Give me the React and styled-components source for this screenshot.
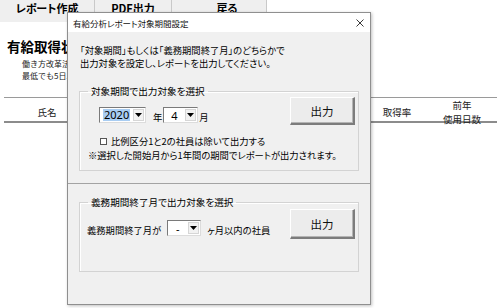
import React from "react";
import styled, { createGlobalStyle } from "styled-components";

const GlobalStyle = createGlobalStyle`
  html, body {
    margin: 0;
    padding: 0;
    background: #ffffff;
  }
  body {
    width: 500px;
    height: 308px;
    overflow: hidden;
    font-family: "Noto Sans CJK JP", "Noto Sans", sans-serif;
    color: #000;
  }
`;

// SHEET (background)
const Sheet = styled.div`
  position: relative;
  width: 500px;
  height: 308px;
`;

const Toolbar = styled.div`
  display: flex;
  height: 22px;
`;

const ToolButton = styled.div`
  width: ${(p) => p.$w}px;
  height: 22px;
  box-sizing: border-box;
  padding-left: ${(p) => p.$pl || 0}px;
  background: #efefef;
  border-right: 1px solid #c9c9c9;
  font-size: 11px;
  font-weight: bold;
  line-height: 16px;
  text-align: center;
  font-feature-settings: "palt";
`;

const SheetTitle = styled.h1`
  margin: 15px 0 0 7px;
  font-size: 13.5px;
  line-height: 18px;
  font-weight: bold;
  white-space: nowrap;
  font-feature-settings: "palt";
`;

const Note = styled.p`
  margin: 0 0 0 22px;
  font-size: 8px;
  line-height: 12px;
  color: #222;
  white-space: nowrap;
`;

const Notes = styled.div`
  margin-top: 3px;
`;

const HeaderRow = styled.div`
  display: grid;
  grid-template-columns: 86px 1fr 60px 70px;
  align-items: center;
  margin: 15px 3px 0 4px;
  height: 23px;
  border-top: 1px solid #9a9a9a;
  border-bottom: 2px solid #8c8c8c;
`;

const HeaderCell = styled.div`
  font-size: 9.5px;
  line-height: 14px;
  text-align: center;
  color: #222;
  font-feature-settings: "palt";
`;

// DIALOG (window on top of the sheet)
const Dialog = styled.div`
  position: absolute;
  left: 67px;
  top: 12px;
  width: 304px;
  height: 293px;
  box-sizing: border-box;
  border: 1px solid #8f8f8f;
  background: #f0f0f0;
  box-shadow: 1px 1px 3px rgba(0, 0, 0, 0.25);
  display: flex;
  flex-direction: column;
  font-feature-settings: "palt";
`;

const TitleBar = styled.div`
  display: flex;
  align-items: center;
  justify-content: space-between;
  height: 19px;
  padding: 0 6px 0 5px;
  background: #ffffff;
  font-size: 8.5px;
  color: #111;
`;

const TopSection = styled.div`
  height: 151px;
  padding: 12px 11px 0 11px;
  box-sizing: border-box;
`;

const BottomSection = styled.div`
  flex: 1;
  border-top: 1px solid #a3a3a3;
  padding: 12px 11px 0 11px;
`;

const Message = styled.p`
  margin: 0 0 0 1px;
  font-size: 9.3px;
  line-height: 13px;
  white-space: nowrap;
`;

const Group = styled.fieldset`
  margin: ${(p) => p.$top}px 0 0 0;
  padding: 0;
  border: 1px solid #d3d3d3;
  box-shadow: inset 1px 1px 0 #fff;
  min-width: 0;
  height: ${(p) => p.$h}px;
  box-sizing: border-box;
`;

const Legend = styled.legend`
  margin-left: 8px;
  padding: 0 3px;
  font-size: 9.6px;
  line-height: 12px;
`;

const GroupBody = styled.div`
  padding: 0 3px 0 7px;
`;

const Row = styled.div`
  display: flex;
  justify-content: space-between;
  align-items: flex-start;
`;

const Fields = styled.div`
  display: flex;
  align-items: flex-end;
  gap: ${(p) => p.$gap || 0}px;
  margin: ${(p) => p.$m};
`;

const Unit = styled.span`
  font-size: 9.3px;
  line-height: 12px;
  margin: ${(p) => p.$m || "0"};
`;

const Combo = styled.div`
  display: flex;
  width: ${(p) => p.$w}px;
  height: 16px;
  box-sizing: border-box;
  background: #fff;
  border-top: 1px solid #7a7a7a;
  border-left: 1px solid #7a7a7a;
  border-right: 1px solid #dcdcdc;
  border-bottom: 1px solid #dcdcdc;
`;

const ComboValue = styled.div`
  flex: 1;
  display: flex;
  align-items: center;
  justify-content: ${(p) => (p.$left ? "flex-start" : "center")};
  padding-left: ${(p) => (p.$left ? 3 : 0)}px;
  font-family: "Noto Sans", sans-serif;
  font-size: 11px;
`;

const Selected = styled.span`
  background: #a9cdf2;
  line-height: 12px;
  padding: 0 1px;
`;

const ComboArrow = styled.div`
  width: 11px;
  margin: 1px;
  box-sizing: border-box;
  background: #f2f2f2;
  border: 1px solid #d6d6d6;
  display: flex;
  align-items: center;
  justify-content: center;
`;

const ActionButton = styled.button`
  width: 65px;
  height: ${(p) => p.$h}px;
  margin-top: ${(p) => p.$top || 0}px;
  box-sizing: border-box;
  background: #ececec;
  border-top: 1px solid #ffffff;
  border-left: 1px solid #ffffff;
  border-right: 2px solid #7c7c7c;
  border-bottom: 2px solid #7c7c7c;
  box-shadow: inset -1px -1px 0 #b4b4b4;
  font-family: "Noto Sans CJK JP", sans-serif;
  font-size: 11.5px;
  color: #111;
  padding: 0;
`;

const CheckRow = styled.label`
  display: flex;
  align-items: center;
  margin: 9px 0 0 13px;
  font-size: 9.3px;
  line-height: 14px;
  white-space: nowrap;
`;

const CheckBox = styled.span`
  width: 7px;
  height: 7px;
  box-sizing: border-box;
  border: 1px solid #555;
  background: #fff;
  margin-right: 4px;
`;

const Hint = styled.p`
  margin: 0 0 0 1px;
  font-size: 9.3px;
  line-height: 14px;
  white-space: nowrap;
`;

function Arrow() {
  return (
    <svg width="7" height="4" viewBox="0 0 7 4">
      <path d="M0 0H7L3.5 4Z" fill="#000" />
    </svg>
  );
}

function CloseIcon() {
  return (
    <svg width="8" height="8" viewBox="0 0 8 8">
      <path d="M0.5 0.5L7.5 7.5M7.5 0.5L0.5 7.5" stroke="#222" strokeWidth="0.9" />
    </svg>
  );
}

function ComboBox({ width, value, selected, left }) {
  return (
    <Combo $w={width}>
      <ComboValue $left={left}>
        {selected ? <Selected>{value}</Selected> : value}
      </ComboValue>
      <ComboArrow>
        <Arrow />
      </ComboArrow>
    </Combo>
  );
}

export default function App() {
  return (
    <>
      <GlobalStyle />
      <Sheet>
        <Toolbar>
          <ToolButton $w={95}>レポート作成</ToolButton>
          <ToolButton $w={77}>PDF出力</ToolButton>
          <ToolButton $w={95} $pl={16}>戻る</ToolButton>
        </Toolbar>
        <SheetTitle>有給取得状況レポート</SheetTitle>
        <Notes>
          <Note>働き方改革法により年10日以上の有給付与者は</Note>
          <Note>最低でも5日以上の取得が義務付けられています。</Note>
        </Notes>
        <HeaderRow>
          <HeaderCell>氏名</HeaderCell>
          <HeaderCell />
          <HeaderCell>取得率</HeaderCell>
          <HeaderCell>
            前年
            <br />
            使用日数
          </HeaderCell>
        </HeaderRow>

        <Dialog>
          <TitleBar>
            <span>有給分析レポート対象期間設定</span>
            <CloseIcon />
          </TitleBar>
          <TopSection>
            <Message>
              「対象期間」もしくは「義務期間終了月」のどちらかで
              <br />
              出力対象を設定し、レポートを出力してください。
            </Message>
            <Group $top={15} $h={86}>
              <Legend>対象期間で出力対象を選択</Legend>
              <GroupBody>
                <Row>
                  <Fields $m="10px 0 0 12px">
                    <ComboBox width={47} value="2020" selected left />
                    <Unit $m="0 1px 0 7px">年</Unit>
                    <ComboBox width={35} value="4" />
                    <Unit $m="0 0 0 1px">月</Unit>
                  </Fields>
                  <ActionButton $h={28}>出力</ActionButton>
                </Row>
                <CheckRow>
                  <CheckBox />
                  比例区分1と2の社員は除いて出力する
                </CheckRow>
                <Hint>※選択した開始月から1年間の期間でレポートが出力されます。</Hint>
              </GroupBody>
            </Group>
          </TopSection>
          <BottomSection>
            <Group $top={0} $h={76}>
              <Legend>義務期間終了月で出力対象を選択</Legend>
              <GroupBody>
                <Row>
                  <Fields $m="12px 0 0 0" $gap={6}>
                    <Unit>義務期間終了月が</Unit>
                    <ComboBox width={34} value="-" />
                    <Unit>ヶ月以内の社員</Unit>
                  </Fields>
                  <ActionButton $h={30} $top={1}>出力</ActionButton>
                </Row>
              </GroupBody>
            </Group>
          </BottomSection>
        </Dialog>
      </Sheet>
    </>
  );
}
